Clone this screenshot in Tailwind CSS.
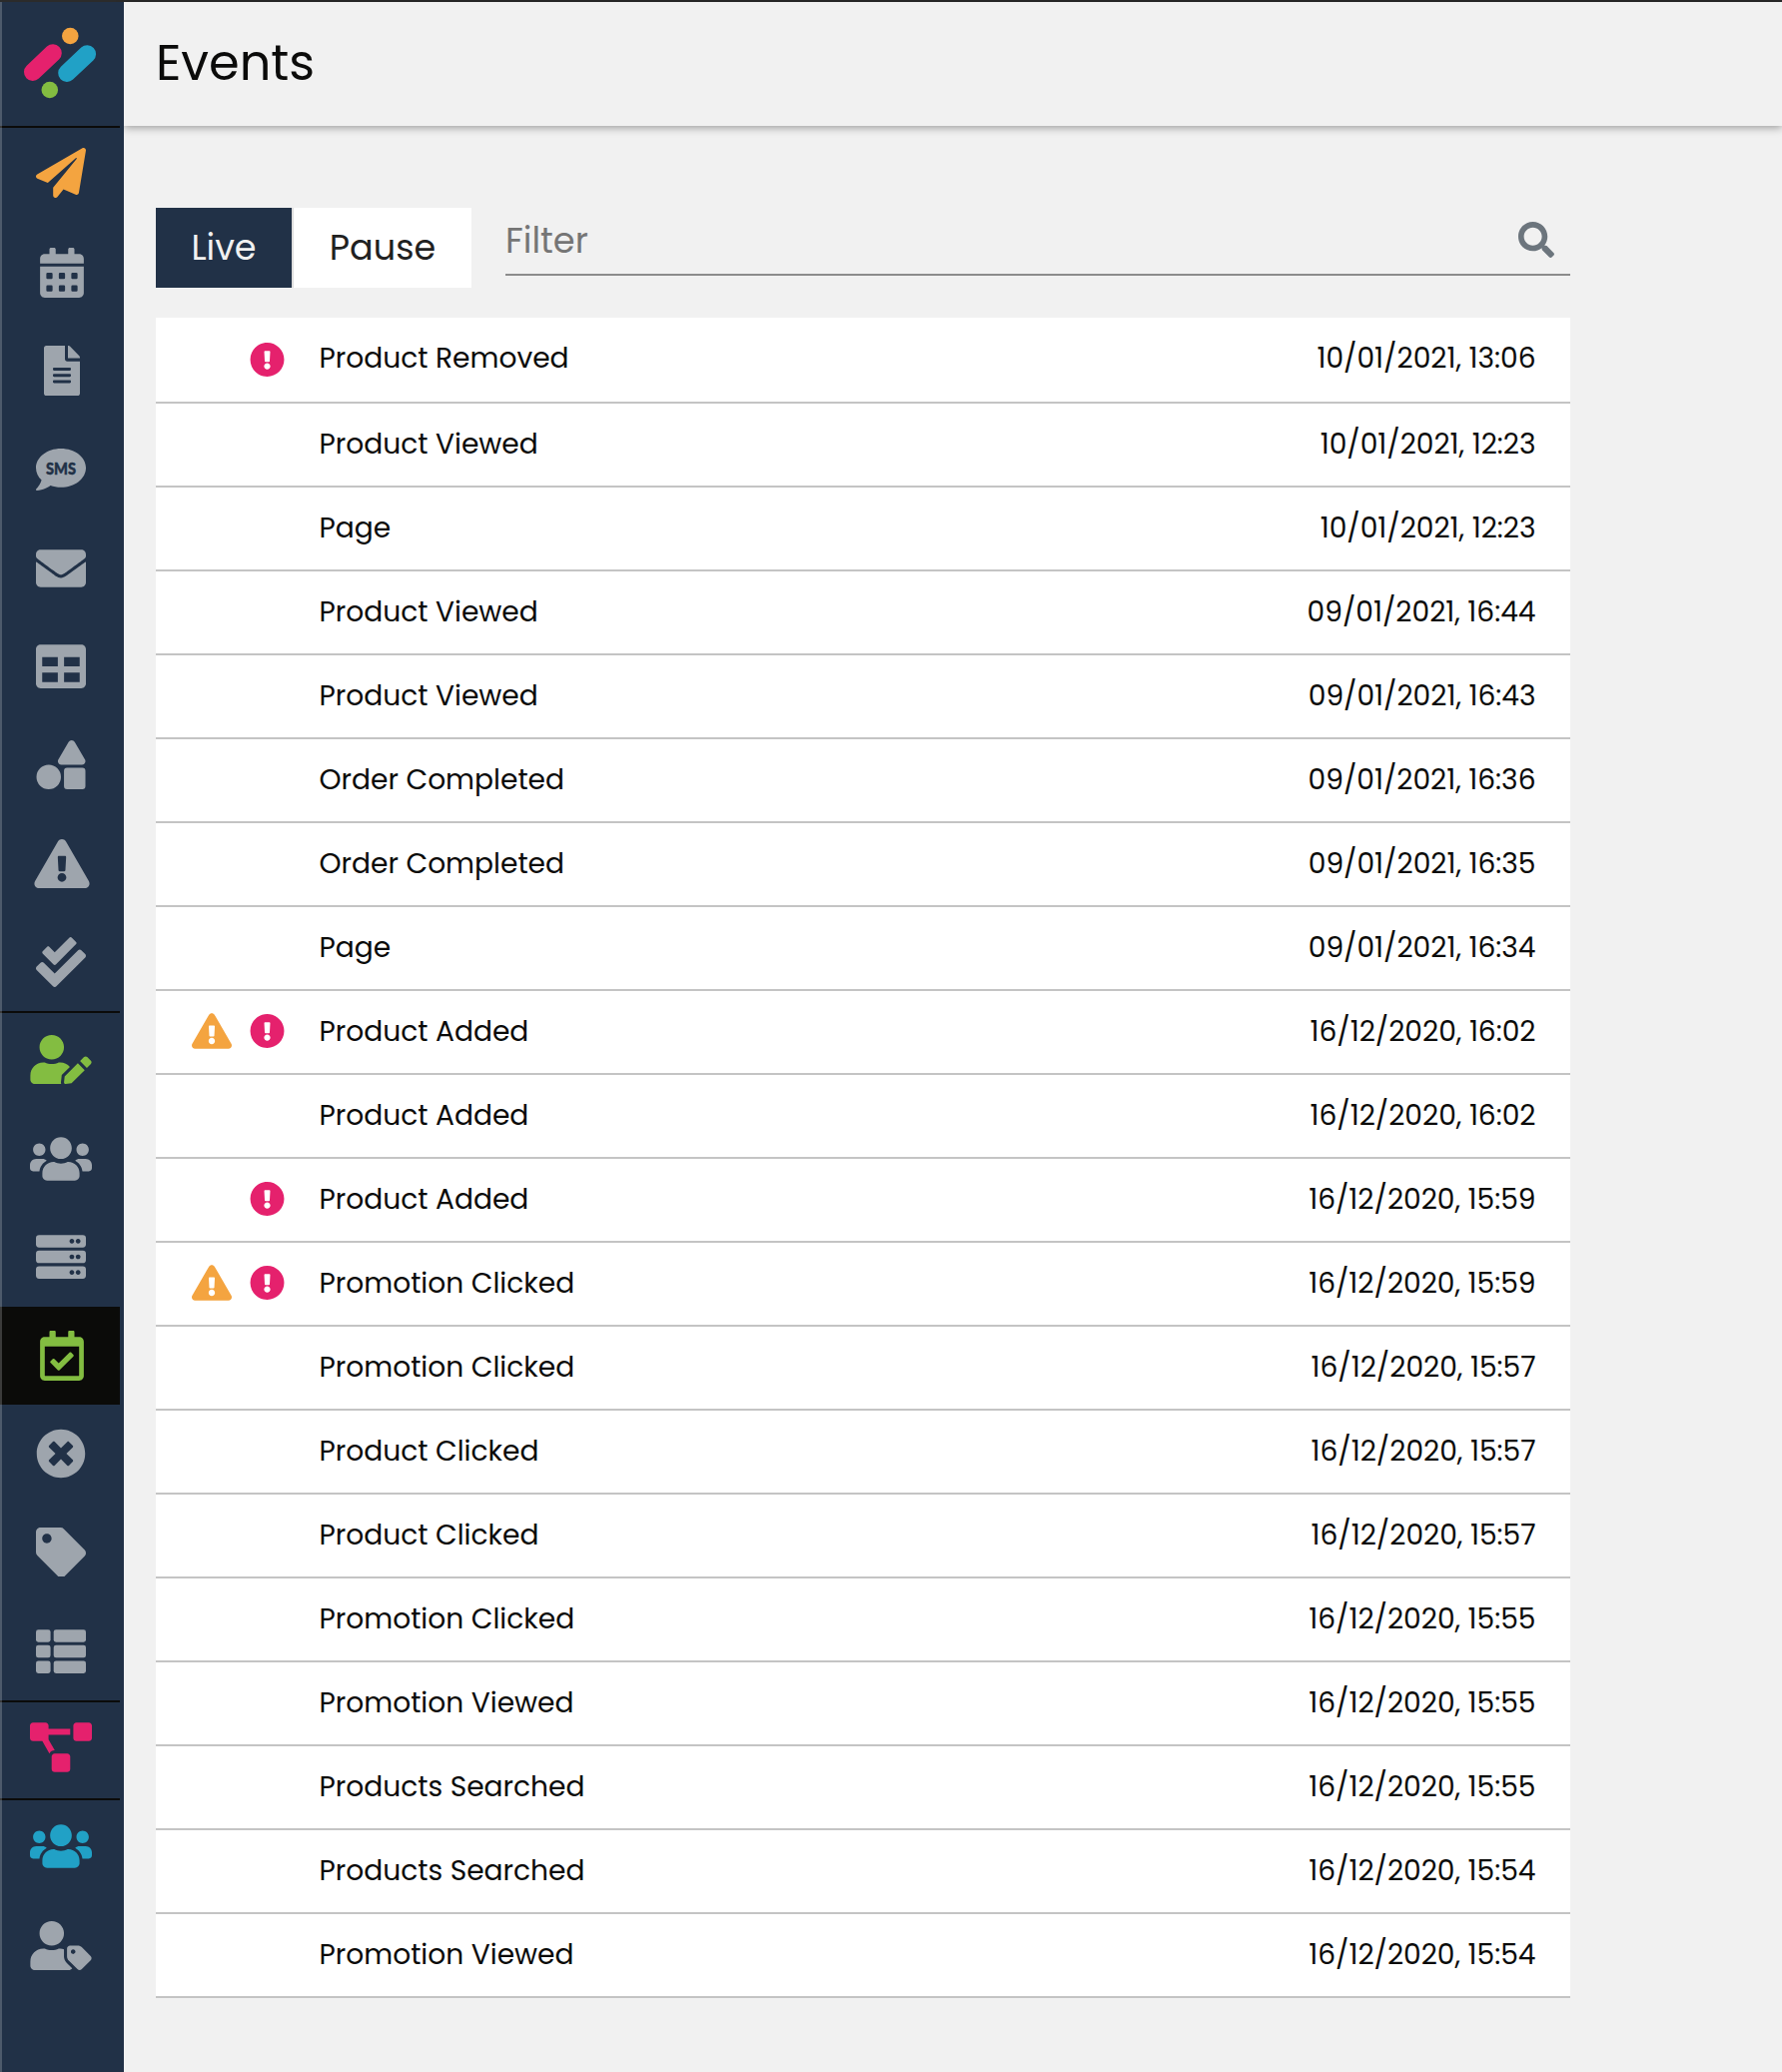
<!DOCTYPE html>
<html lang="en">
<head>
<meta charset="utf-8">
<title>Events</title>
<script src="https://cdn.jsdelivr.net/npm/@tailwindcss/browser@4"></script>
</head>
<body class="bg-[#f1f1f1] font-[Poppins,Inter,sans-serif] text-[#0b0b0a]">

<!-- Icon sprite -->
<svg class="hidden" xmlns="http://www.w3.org/2000/svg">
  <symbol id="plane" viewBox="0 0 512 512"><path d="M476 3.2L12.5 270.6c-18.1 10.4-15.8 35.6 2.2 43.2L121 358.4l287.3-253.2c5.5-4.9 13.3 2.6 8.6 8.3L176 407v80.5c0 23.6 28.5 32.9 42.5 15.8L282 426l124.6 52.2c14.2 6 30.4-2.9 33-18.2l72-432C515 7.8 493.3-6.8 476 3.2z"/></symbol>
  <symbol id="calendar" viewBox="0 0 448 512"><path fill-rule="evenodd" d="M0 464c0 26.5 21.5 48 48 48h352c26.5 0 48-21.5 48-48V192H0zM400 64h-48V16c0-8.8-7.2-16-16-16h-32c-8.8 0-16 7.2-16 16v48H160V16c0-8.8-7.2-16-16-16h-32c-8.8 0-16 7.2-16 16v48H48C21.5 64 0 85.5 0 112v48h448v-48c0-26.5-21.5-48-48-48zM76 256h40q12 0 12 12v40q0 12-12 12H76q-12 0-12-12v-40q0-12 12-12zm128 0h40q12 0 12 12v40q0 12-12 12h-40q-12 0-12-12v-40q0-12 12-12zm128 0h40q12 0 12 12v40q0 12-12 12h-40q-12 0-12-12v-40q0-12 12-12zM76 384h40q12 0 12 12v40q0 12-12 12H76q-12 0-12-12v-40q0-12 12-12zm128 0h40q12 0 12 12v40q0 12-12 12h-40q-12 0-12-12v-40q0-12 12-12zm128 0h40q12 0 12 12v40q0 12-12 12h-40q-12 0-12-12v-40q0-12 12-12z"/></symbol>
  <symbol id="file" viewBox="0 0 384 512"><path d="M224 136V0H24C10.7 0 0 10.7 0 24v464c0 13.3 10.7 24 24 24h336c13.3 0 24-10.7 24-24V160H248c-13.2 0-24-10.8-24-24zm64 236c0 6.6-5.4 12-12 12H108c-6.6 0-12-5.4-12-12v-8c0-6.6 5.4-12 12-12h168c6.6 0 12 5.4 12 12v8zm0-64c0 6.6-5.4 12-12 12H108c-6.6 0-12-5.4-12-12v-8c0-6.6 5.4-12 12-12h168c6.6 0 12 5.4 12 12v8zm0-72v8c0 6.6-5.4 12-12 12H108c-6.6 0-12-5.4-12-12v-8c0-6.6 5.4-12 12-12h168c6.6 0 12 5.4 12 12zm96-114.1v6.1H256V0h6.1c6.4 0 12.5 2.5 17 7l97.9 98c4.5 4.5 7 10.6 7 16.9z"/></symbol>
  <symbol id="sms" viewBox="0 0 512 512"><path d="M256 40C114.6 40 0 129 0 238c0 48 21.4 92 57 126C44.5 412 2.7 456 2.2 456.5c-2.2 2.3-2.8 5.7-1.5 8.7S4.8 470 8 470c66.3 0 116-30 140.6-49 32.7 12 69 18 107.4 18 141.4 0 256-90 256-201S397.4 40 256 40z"/></symbol>
  <symbol id="envelope" viewBox="0 0 512 512"><path d="M502.3 190.8c3.9-3.1 9.7-.2 9.7 4.7V400c0 26.5-21.5 48-48 48H48c-26.5 0-48-21.5-48-48V195.6c0-5 5.7-7.8 9.7-4.7 22.4 17.4 52.1 39.5 154.1 113.6 21.1 15.4 56.7 47.8 92.2 47.6 35.7.3 72-32.8 92.3-47.6 102-74.1 131.6-96.3 154-113.7zM256 320c23.2.4 56.6-29.2 73.4-41.4 132.7-96.3 142.8-104.7 173.4-128.7 5.8-4.5 9.2-11.5 9.2-18.9v-19c0-26.5-21.5-48-48-48H48c-26.5 0-48 21.5-48 48v19c0 7.4 3.4 14.3 9.2 18.9 30.6 23.9 40.7 32.4 173.4 128.7 16.8 12.2 50.2 41.8 73.4 41.4z"/></symbol>
  <symbol id="table" viewBox="0 0 512 512"><path fill-rule="evenodd" d="M464 32H48C21.49 32 0 53.49 0 80v352c0 26.51 21.49 48 48 48h416c26.51 0 48-21.49 48-48V80c0-26.51-21.49-48-48-48zM224 416H64v-96h160v96zm0-160H64v-96h160v96zm224 160H288v-96h160v96zm0-160H288v-96h160v96z"/></symbol>
  <symbol id="shapes" viewBox="0 0 512 512"><path d="M128 256A128 128 0 1 0 256 384 128 128 0 0 0 128 256Zm379-54.86L400.07 18.29a37.26 37.26 0 0 0-64.14 0L229 201.14C214.76 225.52 232.58 256 261.09 256H474.91C503.42 256 521.24 225.52 507 201.14ZM480 288H320a32 32 0 0 0-32 32V480a32 32 0 0 0 32 32H480a32 32 0 0 0 32-32V320A32 32 0 0 0 480 288Z"/></symbol>
  <symbol id="warning" viewBox="0 0 576 512"><path d="M569.517 440.013C587.975 472.007 564.806 512 527.94 512H48.054c-36.937 0-59.999-40.055-41.577-71.987L246.423 23.985c18.467-32.009 64.72-31.951 83.154 0l239.94 416.028zM288 354c-25.405 0-46 20.595-46 46s20.595 46 46 46 46-20.595 46-46-20.595-46-46-46zm-43.673-165.346l7.418 136c.347 6.364 5.609 11.346 11.982 11.346h48.546c6.373 0 11.635-4.982 11.982-11.346l7.418-136c.375-6.874-5.098-12.654-11.982-12.654h-63.383c-6.884 0-12.356 5.78-11.981 12.654z"/></symbol>
  <symbol id="checks" viewBox="0 0 512 512"><path d="M505 174.8l-39.6-39.6c-9.4-9.4-24.6-9.4-33.9 0L192 374.7 80.6 263.2c-9.4-9.4-24.6-9.4-33.9 0L7 302.9c-9.4 9.4-9.4 24.6 0 34L175 505c9.4 9.4 24.6 9.4 33.9 0l296-296.2c9.4-9.5 9.4-24.7.1-34zm-324.3 106c6.2 6.3 16.4 6.3 22.6 0l208-208.2c6.2-6.3 6.2-16.4 0-22.6L366.1 4.7c-6.2-6.3-16.4-6.3-22.6 0L192 156.2l-55.4-55.5c-6.2-6.3-16.4-6.3-22.6 0L68.7 146c-6.2 6.3-6.2 16.4 0 22.6l112 112.2z"/></symbol>
  <symbol id="user-edit" viewBox="0 0 640 512"><path d="M224 256c70.7 0 128-57.3 128-128S294.7 0 224 0 96 57.3 96 128s57.3 128 128 128zm89.6 32h-16.7c-22.2 10.2-46.9 16-72.9 16s-50.6-5.8-72.9-16h-16.7C60.2 288 0 348.2 0 422.4V464c0 26.5 21.5 48 48 48h274.9c-2.4-6.8-3.4-14-2.6-21.3l6.8-60.9 1.2-11.1 7.9-7.9 77.3-77.3c-24.5-27.7-60-45.5-99.9-45.5zm45.3 145.3l-6.8 61c-1.1 10.2 7.5 18.8 17.6 17.6l60.9-6.8 137.9-137.9-71.7-71.7-137.9 137.8zM633 268.9L595.1 231c-9.3-9.3-24.5-9.3-33.8 0l-37.8 37.8-4.1 4.1 71.8 71.7 41.8-41.8c9.3-9.4 9.3-24.5 0-33.9z"/></symbol>
  <symbol id="users" viewBox="0 0 640 512"><path d="M96 224c35.3 0 64-28.7 64-64s-28.7-64-64-64-64 28.7-64 64 28.7 64 64 64zm448 0c35.3 0 64-28.7 64-64s-28.7-64-64-64-64 28.7-64 64 28.7 64 64 64zm32 32h-64c-17.6 0-33.5 7.1-45.1 18.6 40.3 22.1 68.9 62 75.1 109.4h66c17.7 0 32-14.3 32-32v-32c0-35.3-28.7-64-64-64zm-256 0c61.9 0 112-50.1 112-112S381.9 32 320 32 208 82.1 208 144s50.1 112 112 112zm76.8 32h-8.3c-20.8 10-43.9 16-68.5 16s-47.6-6-68.5-16h-8.3C179.6 288 128 339.6 128 403.2V432c0 26.5 21.5 48 48 48h288c26.5 0 48-21.5 48-48v-28.8c0-63.6-51.6-115.2-115.2-115.2zm-223.7-13.4C161.5 263.1 145.6 256 128 256H64c-35.3 0-64 28.7-64 64v32c0 17.7 14.3 32 32 32h65.9c6.3-47.4 34.9-87.3 75.2-109.4z"/></symbol>
  <symbol id="server" viewBox="0 0 512 512"><path fill-rule="evenodd" d="M32 32H480a32 32 0 0 1 32 32V128a32 32 0 0 1-32 32H32a32 32 0 0 1-32-32V64a32 32 0 0 1 32-32zM368 72a24 24 0 1 0 .1 0zm64 0a24 24 0 1 0 .1 0zM32 192H480a32 32 0 0 1 32 32V288a32 32 0 0 1-32 32H32a32 32 0 0 1-32-32V224a32 32 0 0 1 32-32zM368 232a24 24 0 1 0 .1 0zm64 0a24 24 0 1 0 .1 0zM32 352H480a32 32 0 0 1 32 32V448a32 32 0 0 1-32 32H32a32 32 0 0 1-32-32V384a32 32 0 0 1 32-32zM368 392a24 24 0 1 0 .1 0zm64 0a24 24 0 1 0 .1 0z"/></symbol>
  <symbol id="calendar-check" viewBox="0 0 448 512"><path d="M400 64h-48V12c0-6.627-5.373-12-12-12h-40c-6.627 0-12 5.373-12 12v52H160V12c0-6.627-5.373-12-12-12h-40c-6.627 0-12 5.373-12 12v52H48C21.49 64 0 85.49 0 112v352c0 26.51 21.49 48 48 48h352c26.51 0 48-21.49 48-48V112c0-26.51-21.49-48-48-48zm-6 400H54a6 6 0 0 1-6-6V160h352v298a6 6 0 0 1-6 6zm-52.849-200.65L198.842 404.519c-4.705 4.667-12.303 4.637-16.971-.068l-75.091-75.699c-4.667-4.705-4.637-12.303.068-16.971l22.719-22.536c4.705-4.667 12.303-4.637 16.97.069l44.104 44.461 111.072-110.181c4.705-4.667 12.303-4.637 16.971.068l22.536 22.718c4.667 4.705 4.636 12.303-.069 16.97z"/></symbol>
  <symbol id="times" viewBox="0 0 512 512"><path d="M256 8C119 8 8 119 8 256s111 248 248 248 248-111 248-248S393 8 256 8zm121.6 313.1c4.7 4.7 4.7 12.3 0 17L338 377.6c-4.7 4.7-12.3 4.7-17 0L256 312l-65.1 65.6c-4.7 4.7-12.3 4.7-17 0L134.4 338c-4.7-4.7-4.7-12.3 0-17l65.6-65-65.6-65.1c-4.7-4.7-4.7-12.3 0-17l39.6-39.6c4.7-4.7 12.3-4.7 17 0l65 65.7 65.1-65.6c4.7-4.7 12.3-4.7 17 0l39.6 39.6c4.7 4.7 4.7 12.3 0 17L312 256l65.6 65.1z"/></symbol>
  <symbol id="tag" viewBox="0 0 512 512"><path d="M0 252.118V48C0 21.49 21.49 0 48 0h204.118a48 48 0 0 1 33.941 14.059l211.882 211.882c18.745 18.745 18.745 49.137 0 67.882L293.823 497.941c-18.745 18.745-49.137 18.745-67.882 0L14.059 286.059A48 48 0 0 1 0 252.118zM112 64c-26.51 0-48 21.49-48 48s21.49 48 48 48 48-21.49 48-48-21.49-48-48-48z"/></symbol>
  <symbol id="list" viewBox="0 0 512 512"><rect y="32" width="149.3" height="128" rx="24"/><rect x="181.3" y="32" width="330.7" height="128" rx="24"/><rect y="192" width="149.3" height="128" rx="24"/><rect x="181.3" y="192" width="330.7" height="128" rx="24"/><rect y="352" width="149.3" height="128" rx="24"/><rect x="181.3" y="352" width="330.7" height="128" rx="24"/></symbol>
  <symbol id="diagram" viewBox="0 0 640 512"><path d="M384 320H256c-17.67 0-32 14.33-32 32v128c0 17.67 14.33 32 32 32h128c17.67 0 32-14.33 32-32V352c0-17.67-14.33-32-32-32zM192 32c0-17.67-14.33-32-32-32H32C14.33 0 0 14.33 0 32v128c0 17.67 14.33 32 32 32h95.72l73.16 128.04C211.98 300.98 232.4 288 256 288h.28L192 175.51V128h224V64H192V32zM608 0H480c-17.67 0-32 14.33-32 32v128c0 17.67 14.33 32 32 32h128c17.67 0 32-14.33 32-32V32c0-17.67-14.33-32-32-32z"/></symbol>
  <symbol id="user-tag" viewBox="0 0 640 512"><path d="M630.6 364.9l-90.3-90.2c-12-12-28.3-18.7-45.3-18.7h-79.3c-17.7 0-32 14.3-32 32v79.2c0 17 6.7 33.2 18.7 45.2l90.3 90.2c12.5 12.5 32.8 12.5 45.3 0l92.5-92.5c12.6-12.5 12.6-32.7.1-45.2zm-182.8-21c-13.3 0-24-10.7-24-24s10.7-24 24-24 24 10.7 24 24c0 13.2-10.7 24-24 24zm-223.8-88c70.7 0 128-57.3 128-128C352 57.3 294.7 0 224 0S96 57.3 96 128c0 70.6 57.3 127.9 128 127.9zm127.8 111.2V294c-12.2-3.6-24.9-6.2-38.2-6.2h-16.7c-22.2 10.2-46.9 16-72.9 16s-50.6-5.8-72.9-16h-16.7C60.2 287.9 0 348.1 0 422.3v41.6c0 26.5 21.5 48 48 48h352c15.5 0 29.1-7.5 37.9-18.9l-58-58c-18.1-18.1-28.1-42.2-28.1-67.9z"/></symbol>
  <symbol id="error" viewBox="0 0 512 512"><path d="M504 256c0 136.997-111.043 248-248 248S8 392.997 8 256C8 119.083 119.043 8 256 8s248 111.083 248 248zm-248 50c-25.405 0-46 20.595-46 46s20.595 46 46 46 46-20.595 46-46-20.595-46-46-46zm-43.673-165.346l7.418 136c.347 6.364 5.609 11.346 11.982 11.346h48.546c6.373 0 11.635-4.982 11.982-11.346l7.418-136c.375-6.874-5.098-12.654-11.982-12.654h-63.383c-6.884 0-12.356 5.78-11.981 12.654z"/></symbol>
</svg>

<div class="relative flex h-[2074px] w-[1784px] flex-col overflow-hidden">
  <div class="h-[2px] shrink-0 bg-[#2b2b2b]"></div>
  <div class="flex min-h-0 flex-1">

    <!-- Sidebar -->
    <nav class="relative z-10 w-[124px] shrink-0 bg-[#213147] fill-[#9ea5ad]">
      <div class="flex h-[126px] w-[120px] items-start border-b-2 border-[#0b0b0a]">
        <svg class="h-[124px] w-[120px]" viewBox="0 2 120 124">
          <circle cx="70.3" cy="36" r="8.3" fill="#f4a440"/>
          <circle cx="49.8" cy="90" r="8.3" fill="#83bd41"/>
          <path d="M32.8 72.2 53 53" fill="none" stroke="#e5216d" stroke-width="17.6" stroke-linecap="round"/>
          <path d="M67 73.2 87.3 54" fill="none" stroke="#21a1c6" stroke-width="17.6" stroke-linecap="round"/>
        </svg>
      </div>
      <div class="flex w-[120px] flex-col border-b-2 border-[#0b0b0a]">
        <a class="flex h-[96px] items-center justify-center pb-[6px] pl-[2px]"><svg class="h-[50px] w-[50px] fill-[#f4a440]"><use href="#plane"/></svg></a>
        <a class="flex h-[98.5px] items-center justify-center pl-[4px]"><svg class="h-[50px] w-[44px]"><use href="#calendar"/></svg></a>
        <a class="flex h-[98.5px] items-center justify-center pb-[2px] pl-[4px]"><svg class="h-[50px] w-[36px]" viewBox="0 0 384 512" preserveAspectRatio="none"><use href="#file" width="384" height="512"/></svg></a>
        <a class="flex h-[98.5px] items-center justify-center pl-[2px]"><svg class="h-[50px] w-[50px]" viewBox="0 0 50 50"><use href="#sms" width="50" height="50"/><text x="25" y="29.8" text-anchor="middle" class="fill-[#213147] stroke-[#213147] stroke-[0.5px] font-[Lato,sans-serif] text-[16.5px] font-black" textLength="30" lengthAdjust="spacingAndGlyphs">SMS</text></svg></a>
        <a class="flex h-[98.5px] items-center justify-center pl-[2px]"><svg class="h-[50px] w-[50px]"><use href="#envelope"/></svg></a>
        <a class="flex h-[98.5px] items-center justify-center pl-[2px]"><svg class="h-[50px] w-[50px]"><use href="#table"/></svg></a>
        <a class="flex h-[98.5px] items-center justify-center pl-[2px]"><svg class="h-[49px] w-[50px]"><use href="#shapes"/></svg></a>
        <a class="flex h-[98.5px] items-center justify-center pl-[4px]"><svg class="h-[49px] w-[56px]"><use href="#warning"/></svg></a>
        <a class="flex h-[98.5px] items-center justify-center pl-[2px]"><svg class="h-[50px] w-[50px]"><use href="#checks"/></svg></a>
      </div>
      <div class="flex w-[120px] flex-col border-b-2 border-[#0b0b0a]">
        <a class="flex h-[97px] items-center justify-center pb-[5px] pl-[2px]"><svg class="h-[49px] w-[62px] fill-[#83bd41]"><use href="#user-edit"/></svg></a>
        <a class="flex h-[98.5px] items-center justify-center pl-[2px]"><svg class="h-[50px] w-[62px]"><use href="#users"/></svg></a>
        <a class="flex h-[98.5px] items-center justify-center pb-[2px] pl-[2px]"><svg class="h-[50px] w-[50px]"><use href="#server"/></svg></a>
        <a class="flex h-[98px] items-center justify-center bg-[#0b0b09] pl-[4px]"><svg class="h-[50px] w-[44px] fill-[#83bd41]"><use href="#calendar-check"/></svg></a>
        <a class="flex h-[98.6px] items-center justify-center pl-[2px]"><svg class="h-[50px] w-[50px]"><use href="#times"/></svg></a>
        <a class="flex h-[98.6px] items-center justify-center pl-[2px]"><svg class="h-[49px] w-[50px]" viewBox="0 0 512 500"><use href="#tag" width="512" height="512"/></svg></a>
        <a class="flex h-[98.8px] items-center justify-center pl-[2px]"><svg class="h-[50px] w-[50px]"><use href="#list"/></svg></a>
      </div>
      <div class="flex w-[120px] flex-col border-b-2 border-[#0b0b0a]">
        <a class="flex h-[96px] items-center justify-center pb-[6px] pl-[2px]"><svg class="h-[50px] w-[62px] fill-[#e5216d]"><use href="#diagram"/></svg></a>
      </div>
      <div class="flex w-[120px] flex-col">
        <a class="flex h-[97px] items-center justify-center pb-[5px] pl-[2px]"><svg class="h-[50px] w-[62px] fill-[#21a1c6]"><use href="#users"/></svg></a>
        <a class="flex h-[98px] items-center justify-center pl-[2px]"><svg class="h-[49px] w-[62px]"><use href="#user-tag"/></svg></a>
      </div>
      <div class="absolute inset-y-0 left-0 w-[2px] bg-white/20"></div>
    </nav>

    <div class="flex flex-1 flex-col">
      <header class="flex h-[124px] shrink-0 items-start bg-[#f1f1f1] pl-8 shadow-[0_2px_8px_rgba(0,0,0,0.35)]">
        <h1 class="text-[49.4px] leading-[121px]">Events</h1>
      </header>

      <main class="w-[1448px] pt-[82px] pl-8">
        <div class="flex h-[80px] gap-[34px]">
          <div class="flex text-[35px] leading-[80px]">
            <button class="w-[136px] bg-[#213147] text-[#f1f1f1]">Live</button>
            <button class="w-[180px] border-l-2 border-[#dedede] bg-white text-[#212121]">Pause</button>
          </div>
          <div class="flex h-[68px] flex-1 items-center justify-between border-b-2 border-[#8c8c8c] pr-4">
            <span class="text-[35.2px] leading-none text-[#757575]">Filter</span>
            <svg class="mb-[3px] h-[36px] w-[36px] fill-[#6c757d]" viewBox="0 0 512 512"><path d="M505 442.7L405.3 343c-4.5-4.5-10.6-7-17-7H372c27.6-35.3 44-79.7 44-128C416 93.1 322.9 0 208 0S0 93.1 0 208s93.1 208 208 208c48.3 0 92.7-16.4 128-44v16.3c0 6.4 2.5 12.5 7 17l99.7 99.7c9.4 9.4 24.6 9.4 33.9 0l28.3-28.3c9.4-9.4 9.4-24.6.1-34zM208 336c-70.7 0-128-57.2-128-128 0-70.7 57.2-128 128-128 70.7 0 128 57.2 128 128 0 70.7-57.2 128-128 128z"/></svg>
          </div>
        </div>
        <div id="events" class="mt-[30px] flex flex-col bg-white text-[28.1px] leading-[80px]"></div>
      </main>
    </div>
  </div>
</div>

<script>
  // [flags, event name, timestamp]; w = warning, e = error
  const events = [
    ['e', 'Product Removed', '10/01/2021, 13:06'],
    ['', 'Product Viewed', '10/01/2021, 12:23'],
    ['', 'Page', '10/01/2021, 12:23'],
    ['', 'Product Viewed', '09/01/2021, 16:44'],
    ['', 'Product Viewed', '09/01/2021, 16:43'],
    ['', 'Order Completed', '09/01/2021, 16:36'],
    ['', 'Order Completed', '09/01/2021, 16:35'],
    ['', 'Page', '09/01/2021, 16:34'],
    ['we', 'Product Added', '16/12/2020, 16:02'],
    ['', 'Product Added', '16/12/2020, 16:02'],
    ['e', 'Product Added', '16/12/2020, 15:59'],
    ['we', 'Promotion Clicked', '16/12/2020, 15:59'],
    ['', 'Promotion Clicked', '16/12/2020, 15:57'],
    ['', 'Product Clicked', '16/12/2020, 15:57'],
    ['', 'Product Clicked', '16/12/2020, 15:57'],
    ['', 'Promotion Clicked', '16/12/2020, 15:55'],
    ['', 'Promotion Viewed', '16/12/2020, 15:55'],
    ['', 'Products Searched', '16/12/2020, 15:55'],
    ['', 'Products Searched', '16/12/2020, 15:54'],
    ['', 'Promotion Viewed', '16/12/2020, 15:54'],
  ];
  const warning = '<svg class="h-[36px] w-[40px] fill-[#f4a440]"><use href="#warning"/></svg>';
  const error = '<svg class="h-[36px] w-[35px] fill-[#e5216d]"><use href="#error"/></svg>';
  document.getElementById('events').innerHTML = events.map(([flags, name, time]) => `
    <div class="group flex h-[84px] items-start border-b-2 border-[#c4c4c4] pr-[34.5px] first:h-[86px]">
      <div class="flex h-[80px] w-[128.5px] items-center justify-end gap-[17.5px] group-first:h-[84px]">${flags.includes('w') ? warning : ''}${flags.includes('e') ? error : ''}</div>
      <div class="flex-1 pl-[35px]">${name}</div>
      <div>${time}</div>
    </div>`).join('');
</script>
</body>
</html>
